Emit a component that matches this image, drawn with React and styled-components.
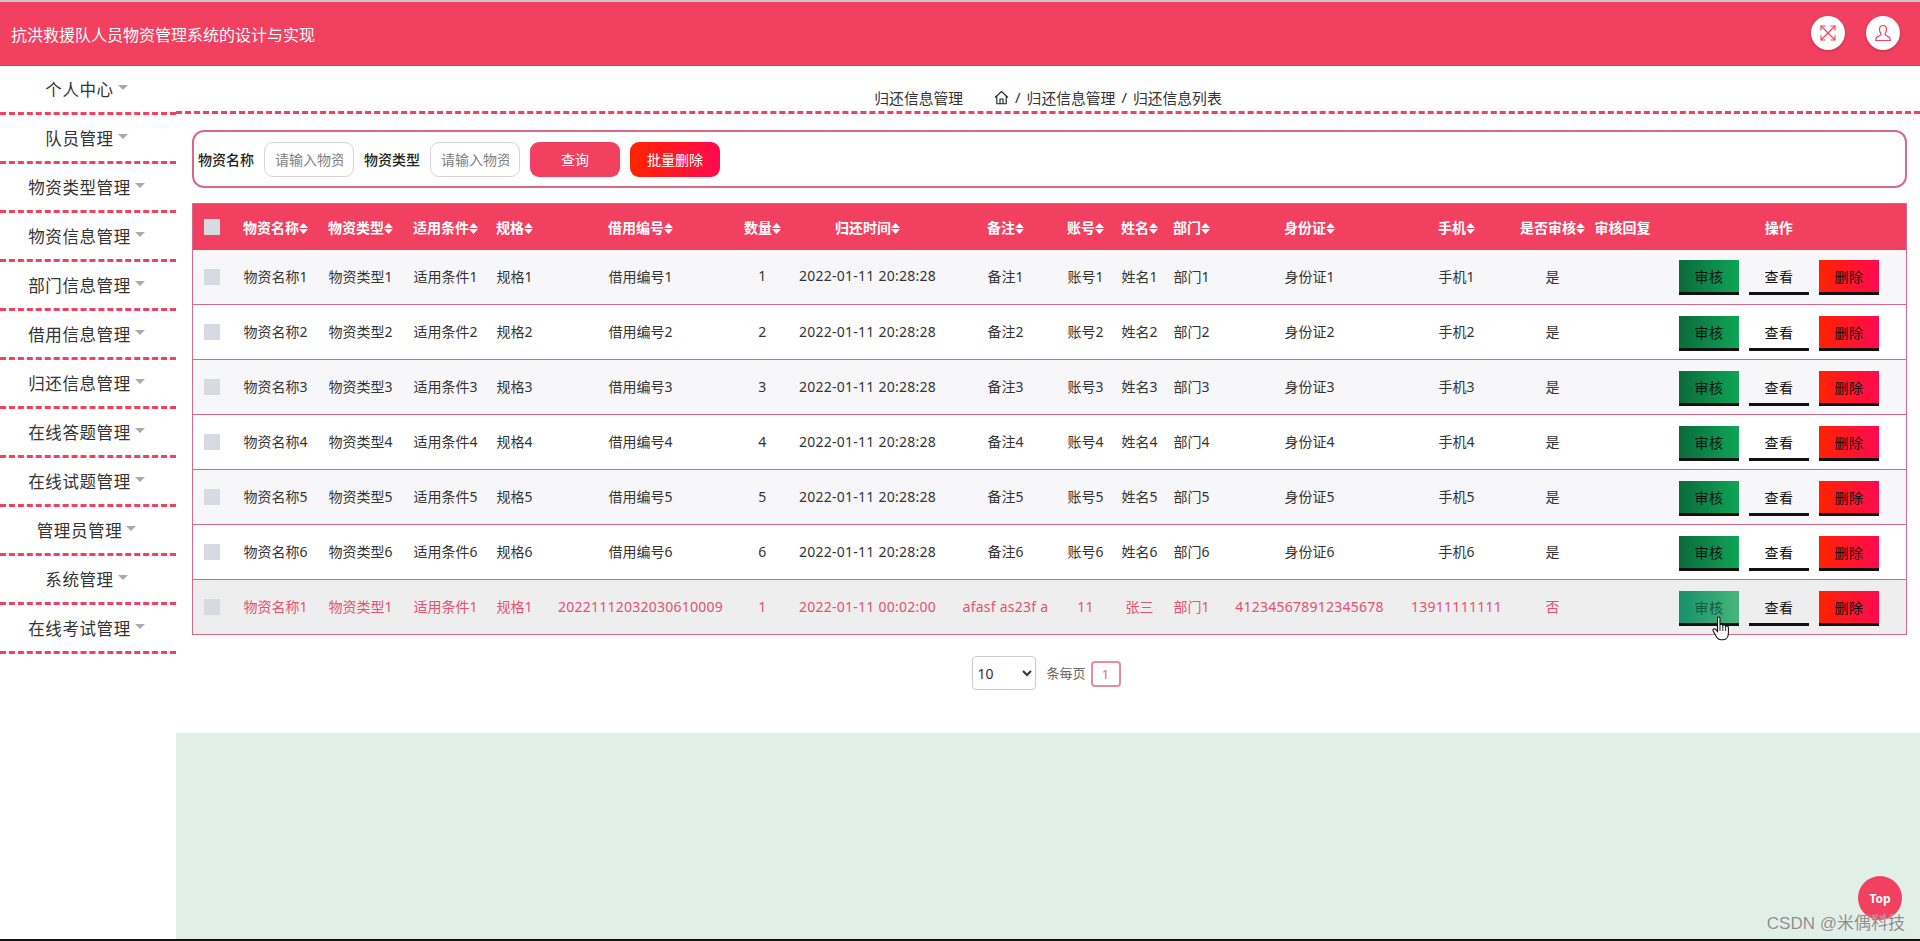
import React from 'react'
import styled, { createGlobalStyle } from 'styled-components'

const PINK = '#f14060'
const LINE = '#d9688a'
const FONT = '"Noto Sans", "Noto Sans CJK SC", sans-serif'

const GlobalStyle = createGlobalStyle`
    html, body {
        margin: 0;
        padding: 0;
        background: #fff;
        font-family: ${FONT};
    }
    * {
        box-sizing: border-box;
    }
`
const Page = styled.div`
    position: relative;
    height: 941px;
    display: flex;
    flex-direction: column;
    overflow: hidden;
    border-top: 2px solid #cfc4c8;
    border-bottom: 2px solid #111;
`
const Header = styled.header`
    height: 64px;
    flex: none;
    background: ${PINK};
    display: flex;
    align-items: center;
    justify-content: space-between;
    padding: 0 20px 0 11px;
    color: #fff;
    font-size: 16px;
`
const HeaderIcons = styled.div`
    display: flex;
    gap: 21px;
    margin-bottom: 2px;
`
const RoundIcon = styled.div`
    width: 34px;
    height: 34px;
    border-radius: 50%;
    background: #fff;
    display: flex;
    align-items: center;
    justify-content: center;
    box-shadow: 0 1px 3px rgba(120, 20, 40, 0.4);
`
const Body = styled.div`
    flex: 1;
    display: flex;
    min-height: 0;
`
const Side = styled.nav`
    width: 176px;
    flex: none;
`
const SideItem = styled.div`
    height: 49px;
    display: flex;
    align-items: center;
    justify-content: center;
    gap: 4px;
    padding-right: 3px;
    border-bottom: 3px dashed ${PINK};
    font-size: 16.5px;
    letter-spacing: 0.6px;
    color: #333;
`
const Caret = styled.span`
    width: 0;
    height: 0;
    margin-bottom: 3px;
    border-left: 5px solid transparent;
    border-right: 5px solid transparent;
    border-top: 5px solid #aaa;
`
const Main = styled.main`
    flex: 1;
    min-width: 0;
    display: flex;
    flex-direction: column;
`
const Crumbs = styled.div`
    height: 48px;
    flex: none;
    display: flex;
    align-items: center;
    justify-content: center;
    padding-top: 17px;
    border-bottom: 3px dashed ${PINK};
    font-size: 14.8px;
    color: #333;
`
const CrumbTitle = styled.span`
    margin-right: 31px;
`
const CrumbSep = styled.span`
    margin: 0 6px;
`
const SearchBox = styled.div`
    height: 58px;
    margin: 16px 13px 0 16px;
    flex: none;
    display: flex;
    align-items: center;
    gap: 10px;
    padding: 0 4px;
    border: 2px solid ${LINE};
    border-radius: 12px;
`
const SearchLabel = styled.label`
    font-size: 14px;
    font-weight: 500;
    color: #222;
`
const SearchInput = styled.input`
    width: 90px;
    height: 35px;
    padding: 0 10px;
    border: 1.5px solid #d4d4da;
    border-radius: 9px;
    outline: none;
    font-family: inherit;
    font-size: 14px;
    &::placeholder {
        color: #808080;
    }
`
const SearchButton = styled.button`
    width: 90px;
    height: 35px;
    border: none;
    border-radius: 9px;
    color: #fff;
    font-family: inherit;
    font-size: 14px;
    background: ${(p) => (p.$danger ? 'linear-gradient(90deg, #ff2400, #ff0a50)' : PINK)};
`
const Table = styled.table`
    width: 1715px;
    margin: 15px 0 0 16px;
    flex: none;
    table-layout: fixed;
    border-collapse: collapse;
    border: 1px solid ${LINE};
    font-size: 14px;
`
const HeadCell = styled.th`
    height: 46px;
    padding: 0;
    background: ${PINK};
    color: #fff;
    font-size: 14px;
    font-weight: 700;
    white-space: nowrap;
    text-align: center;
`
const Row = styled.tr`
    height: 55px;
    border-bottom: 1px solid ${LINE};
    background: ${(p) => (p.$hover ? '#eeeeef' : p.$odd ? '#f7f7f9' : '#fff')};
    color: ${(p) => (p.$hover ? '#e8506f' : '#333')};
`
const Cell = styled.td`
    padding: 0 0 2px;
    text-align: center;
    white-space: nowrap;
    letter-spacing: ${(p) => (p.$latin ? '0.25px' : '0')};
`
const CheckCell = styled.td`
    padding: 0;
    text-align: center;
`
const Check = styled.span`
    display: inline-block;
    width: 16px;
    height: 16px;
    margin: 4px 0 0 2px;
    background: #d6dae3;
`
const Actions = styled.div`
    display: flex;
    justify-content: flex-end;
    gap: 10px;
    padding: 4px 27px 0 0;
`
const ActionButton = styled.button`
    position: relative;
    width: 60px;
    height: 35px;
    padding: 0;
    border: none;
    border-bottom: 3px solid #111;
    font-family: inherit;
    font-size: 14px;
    letter-spacing: 0.5px;
    background: ${(p) => p.$bg};
    color: ${(p) => p.$fg || '#111'};
`
const Cursor = styled.svg`
    position: absolute;
    left: 33px;
    top: 25px;
    width: 19px;
    height: 25px;
    z-index: 2;
`
const Pager = styled.div`
    height: 98px;
    flex: none;
    display: flex;
    align-items: flex-start;
    justify-content: center;
    padding: 21px 3px 0 0;
    gap: 10px;
    font-size: 13px;
    color: #666;
`
const PageSelect = styled.select`
    width: 64px;
    height: 34px;
    padding-left: 0;
    border: 1px solid #ccc;
    border-radius: 4px;
    background: #fff;
    font-family: inherit;
    font-size: 14px;
    color: #333;
`
const PerPage = styled.span`
    line-height: 34px;
`
const PageNum = styled.span`
    width: 30px;
    height: 26px;
    margin: 5px 0 0 -5px;
    display: flex;
    align-items: center;
    justify-content: center;
    border: 2px solid #e58ca2;
    border-radius: 4px;
    color: #e8648a;
`
const Footer = styled.div`
    flex: 1;
    background: #e0efe8;
`
const TopButton = styled.div`
    position: absolute;
    right: 18px;
    bottom: 19px;
    width: 44px;
    height: 44px;
    border-radius: 50%;
    background: ${PINK};
    color: #fff;
    font-size: 12px;
    font-weight: 700;
    display: flex;
    align-items: center;
    justify-content: center;
`
const Watermark = styled.div`
    position: absolute;
    right: 15px;
    bottom: 5px;
    font-family: "Liberation Sans", "Noto Sans CJK SC", sans-serif;
    font-size: 17px;
    color: #8d8d8d;
    text-shadow: 0 0 1px #fff;
`

const SortIcon = () => (
    <svg width="9" height="11" viewBox="0 0 9 11" style={{ verticalAlign: '-1px' }}>
        <path d="M4.5 0 L9 5 H0 Z M0 6 H9 L4.5 11 Z" fill="#fff" />
    </svg>
)

const ExpandIcon = () => (
    <svg width="18" height="18" viewBox="0 0 18 18" fill="none" stroke={PINK} strokeWidth="1.2">
        <path d="M2 2 L16 16 M16 2 L2 16" />
        <path d="M2 6.5 V2 H6.5 M11.5 2 H16 V6.5 M2 11.5 V16 H6.5 M16 11.5 V16 H11.5" />
    </svg>
)

const UserIcon = () => (
    <svg width="18" height="18" viewBox="0 0 18 18" fill="none" stroke={PINK} strokeWidth="1.2">
        <path d="M9 1.5 C6.5 1.5 5.5 3.5 5.5 5.5 C5.5 7.5 6.5 9 7 10 C7 11 6 11.5 4.5 12.2 C3 13 1.8 13.5 1.8 15 V16.5 H16.2 V15 C16.2 13.5 15 13 13.5 12.2 C12 11.5 11 11 11 10 C11.5 9 12.5 7.5 12.5 5.5 C12.5 3.5 11.5 1.5 9 1.5 Z" />
    </svg>
)

const HomeIcon = () => (
    <svg width="15" height="15" viewBox="0 0 15 15" fill="none" stroke="#222" strokeWidth="1.1">
        <path d="M1 7.5 L7.5 1.5 L14 7.5 M2.8 6.2 V13.7 H12.2 V6.2 M6 13.7 V9 H9 V13.7" />
    </svg>
)

const HandCursor = () => (
    <Cursor viewBox="0 0 19 25">
        <path
            d="M5.5 2.2 C5.5 0.5 8 0.5 8 2.2 V9 C8.5 8 10.5 8 10.8 9.4 C11.5 8.6 13.3 8.8 13.6 10.2 C14.5 9.6 16.4 10 16.4 11.6 V17 C16.4 20.5 14.5 23.8 11 23.8 H9 C6.5 23.8 5 22 3.8 19.8 L1.2 15 C0.4 13.3 2.4 12 3.6 13.4 L5.5 15.5 Z"
            fill="#fff"
            stroke="#111"
            strokeWidth="1.1"
        />
        <path d="M8 9 V15 M10.8 9.4 V15 M13.6 10.2 V15" stroke="#111" strokeWidth="0.9" />
    </Cursor>
)

const menus = ['个人中心', '队员管理', '物资类型管理', '物资信息管理', '部门信息管理', '借用信息管理', '归还信息管理', '在线答题管理', '在线试题管理', '管理员管理', '系统管理', '在线考试管理']

const columns = [
    { label: '物资名称', width: 92, sort: true },
    { label: '物资类型', width: 78, sort: true },
    { label: '适用条件', width: 92, sort: true },
    { label: '规格', width: 46, sort: true },
    { label: '借用编号', width: 206, sort: true },
    { label: '数量', width: 38, sort: true },
    { label: '归还时间', width: 172, sort: true },
    { label: '备注', width: 104, sort: true },
    { label: '账号', width: 56, sort: true },
    { label: '姓名', width: 52, sort: true },
    { label: '部门', width: 52, sort: true },
    { label: '身份证', width: 184, sort: true },
    { label: '手机', width: 110, sort: true },
    { label: '是否审核', width: 82, sort: true },
    { label: '审核回复', width: 58 },
]

const rows = [1, 2, 3, 4, 5, 6].map((n) => [
    `物资名称${n}`, `物资类型${n}`, `适用条件${n}`, `规格${n}`, `借用编号${n}`, `${n}`,
    '2022-01-11 20:28:28', `备注${n}`, `账号${n}`, `姓名${n}`, `部门${n}`, `身份证${n}`, `手机${n}`, '是', '',
])
rows.push([
    '物资名称1', '物资类型1', '适用条件1', '规格1', '20221112032030610009', '1',
    '2022-01-11 00:02:00', 'afasf as23f a', '11', '张三', '部门1', '412345678912345678', '13911111111', '否', '',
])

const GREEN = 'linear-gradient(90deg, #0b6a3c, #0fa556)'
const GREEN_HOVER = 'linear-gradient(90deg, #18906a, #46b67c)'
const RED = 'linear-gradient(90deg, #ff2200, #ff0a50)'

const isLatin = (v) => /^[\x00-\x7f]+$/.test(v)

const App = () => {
    return (
        <Page>
            <GlobalStyle />
            <Header>
                <span>抗洪救援队人员物资管理系统的设计与实现</span>
                <HeaderIcons>
                    <RoundIcon><ExpandIcon /></RoundIcon>
                    <RoundIcon><UserIcon /></RoundIcon>
                </HeaderIcons>
            </Header>
            <Body>
                <Side>
                    {menus.map((m) => (
                        <SideItem key={m}>{m}<Caret /></SideItem>
                    ))}
                </Side>
                <Main>
                    <Crumbs>
                        <CrumbTitle>归还信息管理</CrumbTitle>
                        <HomeIcon />
                        <CrumbSep>/</CrumbSep>
                        <span>归还信息管理</span>
                        <CrumbSep>/</CrumbSep>
                        <span>归还信息列表</span>
                    </Crumbs>
                    <SearchBox>
                        <SearchLabel>物资名称</SearchLabel>
                        <SearchInput placeholder="请输入物资名称" />
                        <SearchLabel>物资类型</SearchLabel>
                        <SearchInput placeholder="请输入物资类型" />
                        <SearchButton>查询</SearchButton>
                        <SearchButton $danger>批量删除</SearchButton>
                    </SearchBox>
                    <Table>
                        <colgroup>
                            <col style={{ width: 37 }} />
                            {columns.map((c) => <col key={c.label} style={{ width: c.width }} />)}
                            <col />
                        </colgroup>
                        <thead>
                            <tr>
                                <HeadCell><Check /></HeadCell>
                                {columns.map((c) => (
                                    <HeadCell key={c.label}>{c.label}{c.sort && <SortIcon />}</HeadCell>
                                ))}
                                <HeadCell>操作</HeadCell>
                            </tr>
                        </thead>
                        <tbody>
                            {rows.map((r, i) => {
                                const hover = i === rows.length - 1
                                return (
                                    <Row key={i} $odd={i % 2 === 0} $hover={hover}>
                                        <CheckCell><Check /></CheckCell>
                                        {r.map((v, j) => <Cell key={j} $latin={isLatin(v)}>{v}</Cell>)}
                                        <Cell>
                                            <Actions>
                                                <ActionButton $bg={hover ? GREEN_HOVER : GREEN} $fg={hover ? '#15573f' : undefined}>
                                                    审核
                                                    {hover && <HandCursor />}
                                                </ActionButton>
                                                <ActionButton $bg="transparent">查看</ActionButton>
                                                <ActionButton $bg={RED}>删除</ActionButton>
                                            </Actions>
                                        </Cell>
                                    </Row>
                                )
                            })}
                        </tbody>
                    </Table>
                    <Pager>
                        <PageSelect defaultValue="10">
                            <option>10</option>
                            <option>20</option>
                            <option>50</option>
                        </PageSelect>
                        <PerPage>条每页</PerPage>
                        <PageNum>1</PageNum>
                    </Pager>
                    <Footer />
                </Main>
            </Body>
            <TopButton>Top</TopButton>
            <Watermark>CSDN @米偶科技</Watermark>
        </Page>
    )
}

export default App
